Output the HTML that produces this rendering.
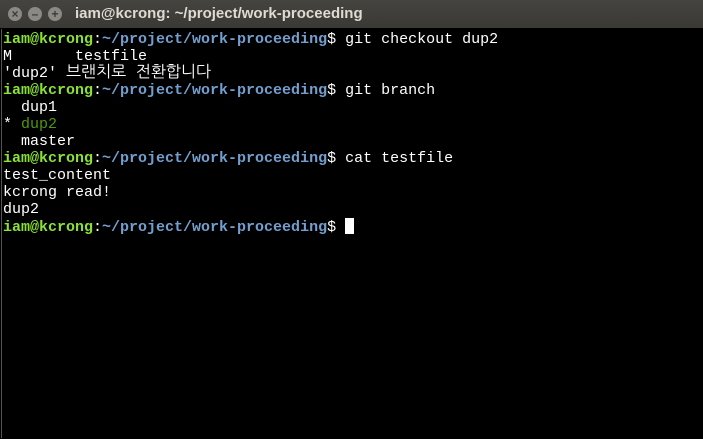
<!DOCTYPE html>
<html><head><meta charset="utf-8"><style>
body{margin:0;width:703px;height:439px;background:#000;overflow:hidden;font-family:"Liberation Sans",sans-serif}
.tb{position:absolute;left:0;top:0;width:703px;height:28px;background:linear-gradient(#45443f,#3a3935);}
.tb .t{position:absolute;left:75px;top:5px;color:#dfdbd2;font-size:15px;font-weight:bold}
.btn{position:absolute;top:7px;width:14px;height:14px;border-radius:50%;background:#8a8984;color:#3c3b37;font-size:12px;line-height:14px;text-align:center;font-weight:bold}
.term{position:absolute;left:1px;top:29px;right:1px;bottom:1px;background:#000;border-left:1px solid #555}
pre{margin:0;position:absolute;left:1px;top:2px;font-family:"Liberation Mono","NanumGothic",monospace;font-size:15px;line-height:17px;color:#fff}
.g{color:#8ae234;font-weight:bold}.b{color:#729fcf;font-weight:bold}.d{color:#4e9a06}
.k{font-size:16px}
.cur{display:inline-block;width:9px;height:16px;background:#fff;vertical-align:-3px}
</style></head><body>
<div class="tb"><div class="btn" style="left:8px">×</div><div class="btn" style="left:28px">–</div><div class="btn" style="left:48px">+</div><div class="t">iam@kcrong: ~/project/work-proceeding</div></div>
<div class="term"><pre><span class="g">iam@kcrong</span>:<span class="b">~/project/work-proceeding</span>$ git checkout dup2
M       testfile
'dup2' <span class="k">브랜치로 전환합니다</span>
<span class="g">iam@kcrong</span>:<span class="b">~/project/work-proceeding</span>$ git branch
  dup1
* <span class="d">dup2</span>
  master
<span class="g">iam@kcrong</span>:<span class="b">~/project/work-proceeding</span>$ cat testfile
test_content
kcrong read!
dup2
<span class="g">iam@kcrong</span>:<span class="b">~/project/work-proceeding</span>$ <span class="cur"></span></pre></div>
</body></html>
